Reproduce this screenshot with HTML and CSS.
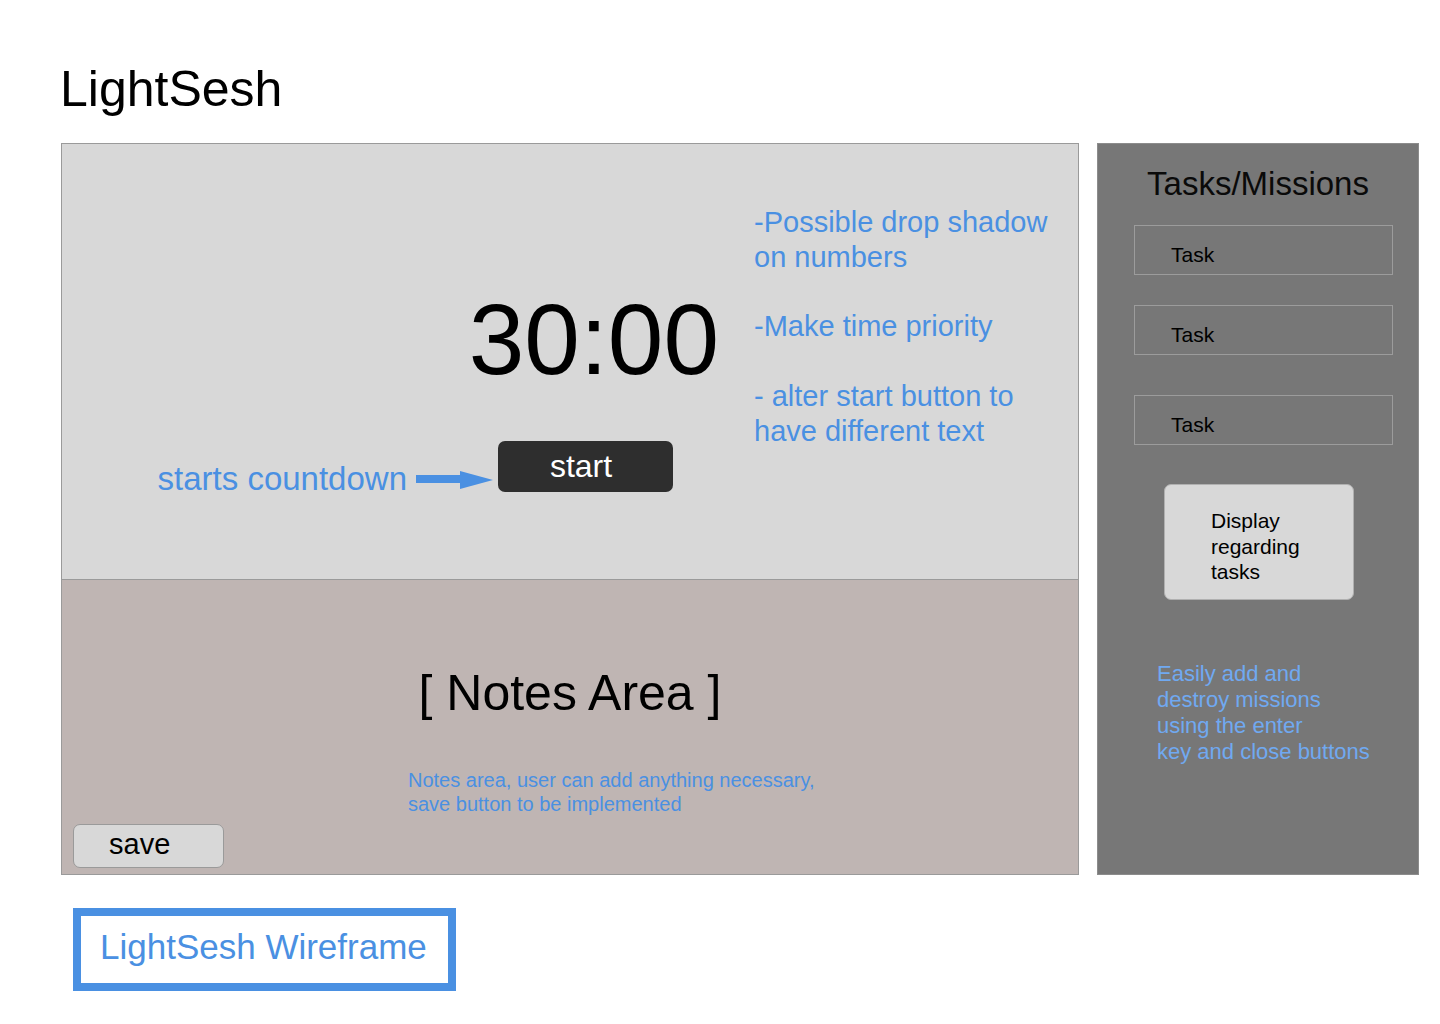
FILE: index.html
```html
<!DOCTYPE html>
<html lang="en">
<head>
<meta charset="utf-8">
<title>LightSesh Wireframe</title>
<link rel="stylesheet" href="styles.css">
</head>
<body>
<div class="page">
  <h1 class="title">LightSesh</h1>
  <div class="board">
    <section class="workspace">
      <div class="timer-area">
        <div class="timer-col">
          <div class="timer">30:00</div>
          <div class="start-row">
            <span class="hint">starts countdown</span>
            <svg class="arrow" width="78" height="20" viewBox="0 0 78 20" aria-hidden="true">
              <rect x="0" y="5" width="46" height="8" fill="#4a90e2"/>
              <polygon points="44,1 77,10 44,19" fill="#4a90e2"/>
            </svg>
            <button class="start-btn">start</button>
          </div>
        </div>
        <div class="annotations">
          <p>-Possible drop shadow<br>on numbers</p>
          <p>-Make time priority</p>
          <p>- alter start button to<br>have different text</p>
        </div>
      </div>
      <div class="notes-area">
        <div class="notes-title">[ Notes Area ]</div>
        <p class="notes-desc">Notes area, user can add anything necessary,<br>save button to be implemented</p>
        <button class="save-btn">save</button>
      </div>
    </section>
    <aside class="tasks">
      <h2 class="tasks-title">Tasks/Missions</h2>
      <ul class="task-list">
        <li class="task">Task</li>
        <li class="task">Task</li>
        <li class="task">Task</li>
      </ul>
      <div class="task-display">Display<br>regarding<br>tasks</div>
      <p class="tasks-note">Easily add and<br>destroy missions<br>using the enter<br>key and close buttons</p>
    </aside>
  </div>
  <div class="label">LightSesh Wireframe</div>
</div>
</body>
</html>
```

FILE: styles.css
```css
* { box-sizing: border-box; }

html, body {
  margin: 0;
  padding: 0;
  background: #ffffff;
}

body {
  font-family: "Liberation Sans", Arial, Helvetica, sans-serif;
  color: #000;
}

.page {
  padding: 62px 0 0 61px;
}

.title {
  margin: 2px 0 0 -1px;
  font-size: 50px;
  line-height: 50px;
  font-weight: normal;
}

.board {
  display: flex;
  gap: 18px;
  margin-top: 29px;
  height: 732px;
}

/* left panel */
.workspace {
  width: 1018px;
  height: 732px;
  border: 1px solid #9a9a9a;
  display: flex;
  flex-direction: column;
}

.timer-area {
  height: 436px;
  background: #d8d8d8;
  border-bottom: 1px solid #9a9a9a;
  display: grid;
  grid-template-columns: 692px 1fr;
}

.timer-col {
  display: flex;
  flex-direction: column;
  align-items: flex-end;
  padding-top: 145px;
}

.timer {
  font-size: 100px;
  line-height: 100px;
  margin-right: 35px;
}

.start-row {
  display: flex;
  align-items: flex-end;
  margin-top: 52px;
  margin-right: 81px;
}

.hint {
  font-size: 33px;
  line-height: 33px;
  color: #4a90e2;
  margin-right: 9px;
  margin-bottom: -3px;
  white-space: nowrap;
}

.arrow {
  display: block;
  margin-bottom: 2px;
  margin-right: 4px;
}

.start-btn {
  width: 175px;
  height: 51px;
  border: none;
  border-radius: 7px;
  background: #2e2e2e;
  color: #fff;
  font-family: inherit;
  font-size: 32px;
  line-height: 51px;
  padding: 0 9px 0 0;
  margin: 0;
}

.annotations {
  padding-top: 61px;
  color: #4a90e2;
  font-size: 29px;
  line-height: 34.8px;
}

.annotations p {
  margin: 0 0 34.8px 0;
}

.notes-area {
  flex: 1;
  background: #bfb5b3;
  display: flex;
  flex-direction: column;
  padding-top: 88px;
}

.notes-title {
  text-align: center;
  font-size: 50px;
  line-height: 50px;
}

.notes-desc {
  margin: 50px 0 0 346px;
  color: #4a90e2;
  font-size: 20px;
  line-height: 24px;
}

.save-btn {
  align-self: flex-start;
  margin: auto 0 6px 11px;
  width: 151px;
  height: 44px;
  background: #d8d8d8;
  border: 1px solid #9a9a9a;
  border-radius: 7px;
  font-family: inherit;
  font-size: 29px;
  line-height: 38px;
  padding: 0 0 4px 35px;
  text-align: left;
  color: #000;
}

/* right panel */
.tasks {
  width: 322px;
  height: 732px;
  background: #777777;
  border: 1px solid #8c8c8c;
  padding-top: 23px;
}

.tasks-title {
  margin: 0;
  text-align: center;
  font-size: 33px;
  line-height: 33px;
  font-weight: normal;
  color: #0a0a0a;
}

.task-list {
  list-style: none;
  margin: 25px 0 0 36px;
  padding: 0;
}

.task {
  width: 259px;
  height: 50px;
  border: 1px solid #9c9c9c;
  display: flex;
  align-items: center;
  padding: 8px 0 0 36px;
  font-size: 21px;
  line-height: 21px;
}

.task + .task {
  margin-top: 30px;
}

.task:nth-child(3) {
  margin-top: 40px;
}

.task-display {
  margin: 39px 0 0 66px;
  width: 190px;
  height: 116px;
  background: #d8d8d8;
  border: 1px solid #b0b0b0;
  border-radius: 7px;
  padding: 23px 0 0 46px;
  font-size: 21px;
  line-height: 25.5px;
}

.tasks-note {
  margin: 61px 0 0 59px;
  color: #70a9f1;
  font-size: 22px;
  line-height: 26px;
}

/* label */
.label {
  margin: 33px 0 0 12px;
  width: 383px;
  height: 83px;
  border: 8px solid #4a90e2;
  display: flex;
  align-items: center;
  padding: 0 0 7px 19px;
  font-size: 35px;
  line-height: 35px;
  color: #4a90e2;
}
```
